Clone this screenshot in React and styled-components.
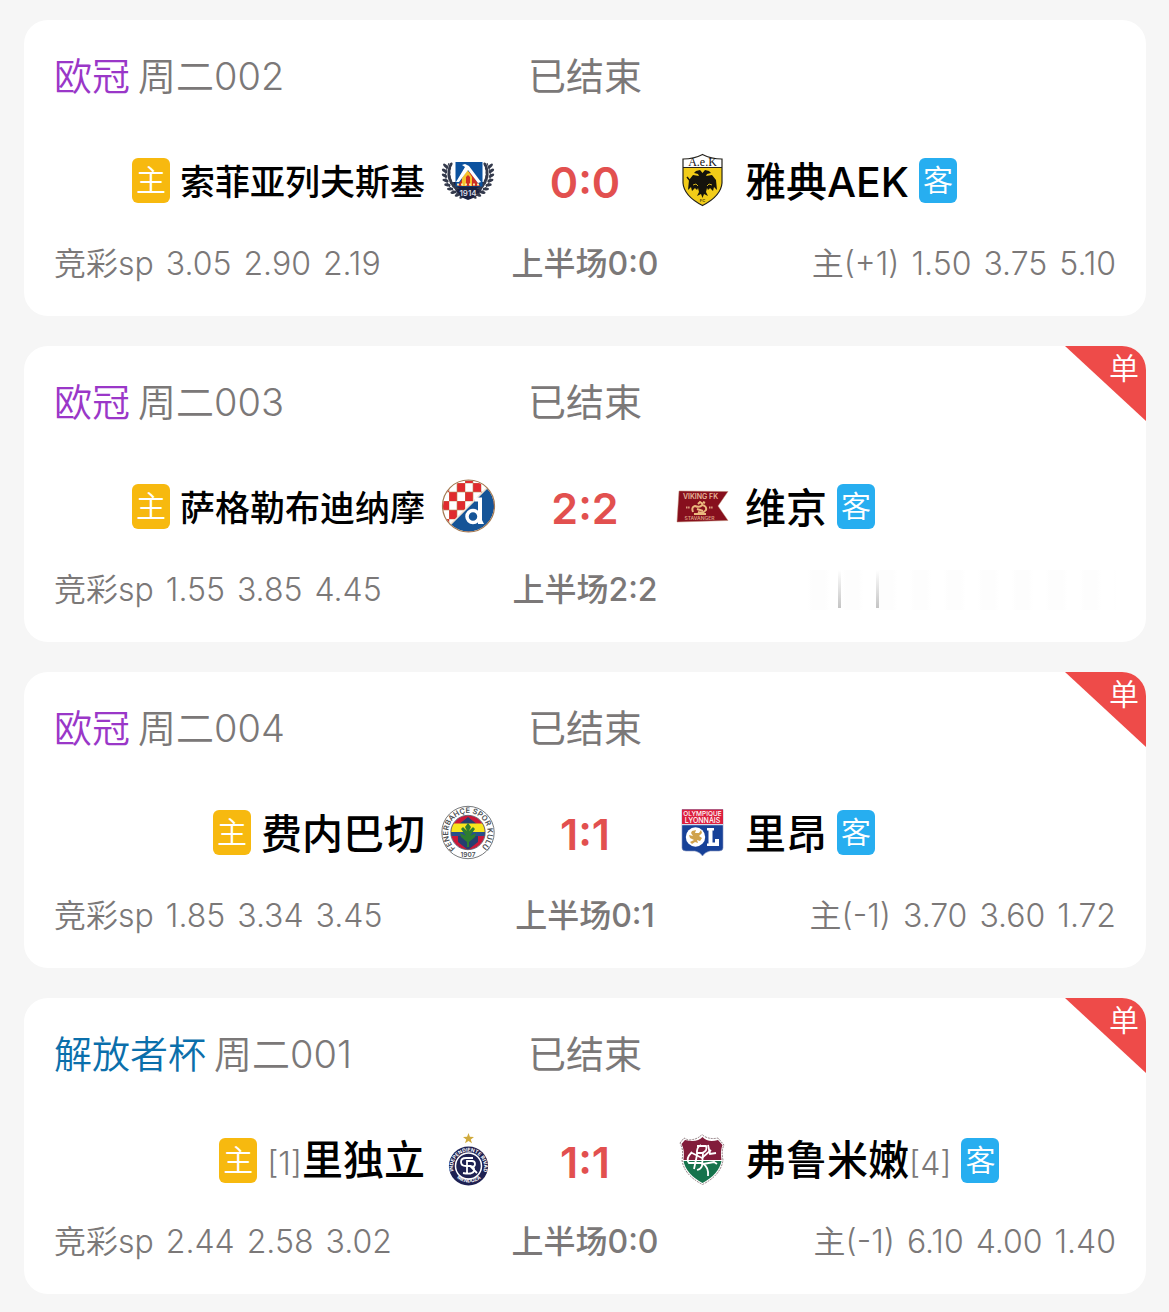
import styled, { createGlobalStyle } from 'styled-components';

const GlobalStyle = createGlobalStyle`
  * {
    box-sizing: border-box;
  }

  body {
    margin: 0;
    background: #f6f6f6;
    font-family: Inter, "Noto Sans CJK SC", sans-serif;
    color: #7b7878;
  }
`;

const MatchList = styled.main`
  display: flex;
  flex-direction: column;
  gap: 30px;
  padding: 20px 23px 17px 24px;
`;

const Card = styled.article`
  position: relative;
  overflow: hidden;
  padding: 32px 30px;
  background: #ffffff;
  border-radius: 24px;
`;

const HeaderRow = styled.header`
  display: grid;
  grid-template-columns: 1fr auto 1fr;
  align-items: center;
  font-size: 38px;
  line-height: 48px;
  font-weight: 350;
`;

const League = styled.span`
  margin-right: 8px;
  color: ${(props) => props.$color};
`;

const Status = styled.span`
  font-weight: 400;
`;

const TeamsRow = styled.div`
  display: grid;
  grid-template-columns: 1fr 180px 1fr;
  align-items: center;
  height: 56px;
  margin: 52px 0 36px;
`;

const Team = styled.div`
  display: flex;
  align-items: center;
  justify-content: ${(props) => (props.$home ? 'flex-end' : 'flex-start')};
  white-space: nowrap;
`;

const TeamName = styled.span`
  margin: ${(props) => (props.$home ? '0 16px 0 10px' : '0 10px 0 16px')};
  padding-top: 4px;
  color: #000000;
  font-size: ${(props) => (props.$long ? '35px' : '41px')};
  line-height: 52px;
  font-weight: 500;
`;

const Rank = styled.small`
  color: #7b7878;
  font-size: 32px;
  font-weight: 350;
`;

const Side = styled.span`
  width: 38px;
  height: 45px;
  border-radius: 6px;
  background: ${(props) => (props.$home ? '#f7b90f' : '#27aef0')};
  color: #ffffff;
  font-size: 30px;
  line-height: 44px;
  font-weight: 350;
  text-align: center;
`;

const Score = styled.strong`
  padding-top: 4px;
  color: #e2504f;
  font-size: 43px;
  line-height: 52px;
  font-weight: 600;
  text-align: center;
`;

const OddsRow = styled.footer`
  display: grid;
  grid-template-columns: 1fr auto 1fr;
  align-items: center;
  font-size: 32px;
  line-height: 40px;
  font-weight: 350;
`;

const Odds = styled.span`
  display: flex;
  gap: 12px;
  justify-self: ${(props) => (props.$end ? 'end' : 'start')};
`;

const HalfTime = styled.span`
  font-weight: 500;
`;

const Corner = styled.div`
  position: absolute;
  top: 0;
  right: 0;
  width: 81px;
  height: 75px;
  padding: 4px 7px 0 0;
  background: #ee4b49;
  clip-path: polygon(0 0, 100% 0, 100% 100%);
  color: #ffffff;
  font-size: 30px;
  line-height: 36px;
  font-weight: 350;
  text-align: right;
`;

/* faded block shown when there are no handicap odds */
const EmptyOdds = styled.span`
  justify-self: end;
  display: flex;
  gap: 35px;
  width: 320px;
  height: 40px;
  padding-left: 42px;
  background: repeating-linear-gradient(90deg, #ffffff 0 12px, #fdfdfd 16px 28px, #ffffff 34px);
`;

const FadeLine = styled.i`
  width: 3px;
  height: 38px;
  background: linear-gradient(#ffffff, #c4c4c4);
`;

const Crest = styled.svg`
  flex: none;
  width: 54px;
  height: 54px;
  overflow: visible;
`;

const leaves = [0, 1, 2, 3, 4, 5, 6, 7, 8];

const Levski = () => (
  <Crest viewBox="0 0 54 54" aria-hidden="true">
    <path d="M12 29 Q14 43 27 47 Q41 43 43 29 Z" fill="#1b2140" />
    {[1, -1].map((dir) => (
      <g key={dir} transform={dir === 1 ? 'translate(-1 0)' : 'translate(55 0) scale(-1 1)'}>
        <path d="M9 10 Q2 24 9 33 Q15 42 25 43" fill="none" stroke="#343a4c" strokeWidth="1" />
        {leaves.map((i) => {
          const a = ((204 - i * 12) * Math.PI) / 180;
          const x = 27 + Math.cos(a) * 21;
          const y = 20 + Math.sin(a) * 22;
          return (
            <g key={i} transform={`translate(${x} ${y}) rotate(${-8 - i * 10})`} fill="#343a4c">
              <ellipse cx="-3" cy="0" rx="1.5" ry="3.2" transform="rotate(-35)" />
              <ellipse cx="3" cy="0" rx="1.5" ry="3.2" transform="rotate(35)" />
            </g>
          );
        })}
      </g>
    ))}
    <path d="M14.5 9 H41.5 V33.5 H14.5 Z" fill="#0c529f" />
    <path d="M17 33 L25 19 H29 L39 33 Z" fill="#cf3023" />
    <path d="M26.5 17 L31 24 V33 H29 V24 L27 22 L25 24 V33 H21 V25 Z" fill="#f5c32c" />
    <path d="M21 12 L24 11 L28 13 L40 29 L37 30 L27 17 L18 29 L15 29 L24 14 Z" fill="#ffffff" />
    <path d="M16 31.5 H40" stroke="#f9e7a4" strokeWidth="2" strokeDasharray="2 2" />
    <path d="M16 36 H38 L35 43 Q27 47 19 43 Z" fill="#1b2140" />
    <text x="27" y="42.5" fontSize="8" fontWeight="600" fill="#d7d8e2" textAnchor="middle">1914</text>
  </Crest>
);

const Aek = () => (
  <Crest viewBox="0 0 54 54" aria-hidden="true">
    <path d="M8 6 Q19 6 27.5 1.5 Q36 6 47 6 V30 Q46 43 27.5 52.5 Q9 43 8 30 Z" fill="#ffffff" />
    <path d="M8 14.5 H47 V30 Q46 43 27.5 52.5 Q9 43 8 30 Z" fill="#f2cc18" />
    <path
      d="M8 6 Q19 6 27.5 1.5 Q36 6 47 6 V30 Q46 43 27.5 52.5 Q9 43 8 30 Z M8 14.5 H47"
      fill="none"
      stroke="#24221c"
      strokeWidth="1.2"
    />
    <text x="27.5" y="13" fontFamily="Liberation Serif" fontSize="12" fontWeight="400" fill="#111111" textAnchor="middle">A.e.K</text>
    <path
      d="M27.5 20 L25 17 L21 18 L19 20 L23 21 L24 23 L18 22 L14 27 L13 37 L16 34 L17 38 L20 35 L22 37 L23 35 L24 39 L22 43 L26 41 L27.5 45 L29 41 L33 43 L31 39 L32 35 L33 37 L35 35 L38 38 L39 34 L42 37 L41 27 L37 22 L31 23 L32 21 L36 20 L34 18 L30 17 Z"
      fill="#15130c"
    />
    <path d="M12 24 L20 34 M35 34 L39 31 M20 34 L22 35 M33 35 L35 34" stroke="#15130c" strokeWidth="1.5" />
    <path d="M18 32 L21 31 L23 33 M32 33 L34 31 L37 32" fill="none" stroke="#d5b41b" strokeWidth="1" />
    <text x="27.5" y="49" fontSize="4" fontWeight="700" fill="#5c4d0d" textAnchor="middle">FC</text>
  </Crest>
);

const Dinamo = () => (
  <Crest viewBox="0 0 54 54" aria-hidden="true">
    <defs>
      <clipPath id="dinamo-round">
        <circle cx="27.5" cy="27" r="25.5" />
      </clipPath>
      <pattern id="dinamo-checks" x="8" y="4" width="16" height="18" patternUnits="userSpaceOnUse">
        <rect width="16" height="18" fill="#ffffff" />
        <path d="M0 9 H8 V18 H0 Z M8 0 H16 V9 H8 Z" fill="#e02b2e" />
        <path d="M0 0 V18 M8 0 V18 M0 9 H16 M0 0 H16" stroke="#b9895a" strokeWidth="0.6" />
      </pattern>
    </defs>
    <g clipPath="url(#dinamo-round)">
      <rect width="54" height="54" fill="url(#dinamo-checks)" />
      <path d="M6 49 L50 5 L60 5 V60 H6 Z" fill="#155497" />
      <path d="M6 49 L50 5" stroke="#eee2d2" strokeWidth="1.5" />
    </g>
    <circle cx="27.5" cy="27" r="26" fill="none" stroke="#a47a53" strokeWidth="1.2" />
    {/* bowl and stem of the club's round letter mark */}
    <circle cx="32" cy="37.5" r="6" fill="#155497" stroke="#ffffff" strokeWidth="3.5" />
    <path d="M34 18.5 H41 V41 L43 45 H37 V22.5 H34 Z" fill="#ffffff" />
  </Crest>
);

const Viking = () => (
  <Crest viewBox="0 0 54 54" aria-hidden="true">
    <path d="M4 12 L53 12.5 L43 27 L53 41.5 L2 43 Z" fill="#870f1d" stroke="#c09079" strokeWidth="0.5" />
    <text x="25.5" y="19.5" fontSize="7" fontWeight="600" fill="#e7b89a" textAnchor="middle">VIKING FK</text>
    <g stroke="#eab87e" fill="none" strokeWidth="2">
      <path d="M18 33 Q16 28 20 27 Q25 29 27 26 Q32 27 31 31 Q28 35 23 33" />
      <path d="M23 25 L25 23 L28 25 M28 23 L30 24 M19 35 H31 M22 30 L28 32" />
    </g>
    <path d="M11 28.5 H15 M34 28.5 H38" stroke="#d99b7d" strokeWidth="2" strokeDasharray="1.5 0.6" />
    <text x="24.5" y="41" fontSize="5" fontWeight="600" fill="#d99b7d" textAnchor="middle">STAVANGER</text>
  </Crest>
);

const Fenerbahce = () => (
  <Crest viewBox="0 0 54 54" aria-hidden="true">
    <defs>
      <path id="fener-ring" d="M14.5 43 A19.7 19.7 0 1 1 42 40.5" />
      <clipPath id="fener-core">
        <circle cx="27" cy="27.5" r="17" />
      </clipPath>
    </defs>
    <circle cx="27" cy="27.5" r="26.2" fill="#ffffff" stroke="#53575a" strokeWidth="0.8" />
    <g clipPath="url(#fener-core)">
      <rect x="9" y="9" width="37" height="37" fill="#ca1839" />
      <path d="M17 20 L27 12 L37 20 V37 L27 45 L17 37 Z" fill="#243f70" />
      <rect x="9" y="18.5" width="37" height="9" fill="#f8e51d" />
      <rect x="9" y="27" width="37" height="4" fill="#28508a" />
    </g>
    <path
      d="M27 18 L30 22 L28 26 L32 22 L34 24 L29 31 L35 28 L34 32 L28 37 V42 H26 V37 L20 32 L19 28 L25 31 L20 24 L22 22 L26 26 L24 22 Z"
      fill="#2e7d31"
    />
    <circle cx="27" cy="27.5" r="17.2" fill="none" stroke="#4e4f60" strokeWidth="0.8" />
    <text fontSize="7.5" fontWeight="600" fill="#4c4f53">
      <textPath href="#fener-ring">FENERBAHÇE SPOR KULÜBÜ</textPath>
    </text>
    <text x="27" y="51.5" fontSize="6.5" fontWeight="600" fill="#4c4f53" textAnchor="middle">1907</text>
  </Crest>
);

const Lyon = () => (
  <Crest viewBox="0 0 54 54" aria-hidden="true">
    <path d="M7 4.5 H48 V43 Q48 46 44 46 H35 Q30 47 27.5 51 Q25 47 20 46 H11 Q7 46 7 43 Z" fill="#174198" stroke="#8795bf" strokeWidth="0.6" />
    <path d="M7 4.5 H48 V19 H7 Z" fill="#dc1f3f" />
    <path d="M7 19.7 H48" stroke="#ffffff" strokeWidth="1" />
    <text x="27.5" y="10.8" fontSize="6.5" fontWeight="500" fill="#ffffff" textAnchor="middle">OLYMPIQUE</text>
    <text x="27.5" y="17.5" fontSize="7" fontWeight="500" fill="#ffffff" textAnchor="middle">LYONNAIS</text>
    <circle cx="20.5" cy="32" r="9.7" fill="#ffffff" />
    <path
      d="M17 26 L21 25 L20 28 L24 28 L26 25 L27 28 L24 31 L27 33 L25 36 L22 35 L23 38 L20 37 L17 39 L15 37 L19 35 L15 33 L14 30 L18 31 L16 28 Z"
      fill="#d0a24c"
    />
    <path d="M32 23 H39 V25.5 H37.5 V37.5 H40 V34 H44 V41 H32 V38.5 H33.5 V25.5 H32 Z" fill="#ffffff" />
  </Crest>
);

const Rivadavia = () => (
  <Crest viewBox="0 0 54 54" aria-hidden="true">
    <defs>
      <path id="riva-top" d="M12.5 38 A15.5 15.5 0 1 1 42.5 38" />
      <path id="riva-bottom" d="M16 45 A18.5 18.5 0 0 0 40 45" />
    </defs>
    <path d="M27.5 0 L28.9 3.7 L33 3.9 L29.8 6.4 L31 10.3 L27.5 8 L24 10.3 L25.2 6.4 L22 3.9 L26.1 3.7 Z" fill="#d0aa3c" />
    <circle cx="27.5" cy="33" r="19.6" fill="#1e2152" />
    <circle cx="27.5" cy="33" r="13" fill="#1e2152" stroke="#ffffff" strokeWidth="1.5" />
    <text fontSize="5" fontWeight="700" fill="#ffffff">
      <textPath href="#riva-top">INDEPENDIENTE RIVAD.</textPath>
    </text>
    <text fontSize="5" fontWeight="700" fill="#ffffff">
      <textPath href="#riva-bottom" startOffset="50%" textAnchor="middle">MENDOZA</textPath>
    </text>
    <path
      d="M32 25 H25 Q20 25 20 29 Q20 33 25 33 H30 Q34 34 33 38 Q31 42 22 40 M26 41 V28 H31 Q34 28 34 31 Q34 34 30 34 L36 40"
      fill="none"
      stroke="#ffffff"
      strokeWidth="1.8"
    />
  </Crest>
);

const Fluminense = () => (
  <Crest viewBox="0 0 54 54" aria-hidden="true">
    <path
      d="M5 10 L9 5 L13 7 Q22 7 27 1.5 Q33 7 43 5 L49 12 Q46 18 48 27 Q46 42 27.5 51.5 Q9 42 7 27 Q9 17 5 10 Z"
      fill="#ffffff"
      stroke="#63484d"
      strokeWidth="0.7"
      strokeDasharray="2 1"
    />
    <path d="M6.5 11 L10 7 Q22 10 27.5 4 Q33 10 43 7 L47.5 12 Q45 18 46.5 27 H8.5 Q10 17 6.5 11 Z" fill="#821d3b" />
    <path d="M8.5 28 H46.5 Q44 41 27.5 50 Q11 41 8.5 28 Z" fill="#16734c" />
    <g fill="none" stroke="#ffffff" strokeWidth="1.8">
      <path d="M26 12 Q21 14 22 22 L19 36 M22 13 H31 Q33 18 27 20 H22" />
      <path d="M17 19 Q10 26 14 30 H27 Q34 34 33 43 M17 20 L27 25 L36 17" />
      <path d="M28 20 L27 33 Q26 36 22 37 M28 31 L39 29 L42 31 M33 12 L35 21 L41 20" />
    </g>
  </Crest>
);

const matches = [
  {
    id: '002',
    league: '欧冠',
    color: '#9a37c8',
    score: '0:0',
    half: '0:0',
    home: { name: '索菲亚列夫斯基', crest: <Levski />, long: true },
    away: { name: '雅典AEK', crest: <Aek /> },
    odds: ['3.05', '2.90', '2.19'],
    handicap: ['主(+1)', '1.50', '3.75', '5.10'],
  },
  {
    id: '003',
    league: '欧冠',
    color: '#9a37c8',
    score: '2:2',
    half: '2:2',
    home: { name: '萨格勒布迪纳摩', crest: <Dinamo />, long: true },
    away: { name: '维京', crest: <Viking /> },
    odds: ['1.55', '3.85', '4.45'],
    single: true,
  },
  {
    id: '004',
    league: '欧冠',
    color: '#9a37c8',
    score: '1:1',
    half: '0:1',
    home: { name: '费内巴切', crest: <Fenerbahce /> },
    away: { name: '里昂', crest: <Lyon /> },
    odds: ['1.85', '3.34', '3.45'],
    handicap: ['主(-1)', '3.70', '3.60', '1.72'],
    single: true,
  },
  {
    id: '001',
    league: '解放者杯',
    color: '#0b6fab',
    score: '1:1',
    half: '0:0',
    home: { name: '里独立', rank: '[1]', crest: <Rivadavia /> },
    away: { name: '弗鲁米嫩', rank: '[4]', crest: <Fluminense /> },
    odds: ['2.44', '2.58', '3.02'],
    handicap: ['主(-1)', '6.10', '4.00', '1.40'],
    single: true,
  },
];

const Match = ({ match }) => {
  const { home, away } = match;

  return (
    <Card>
      {match.single && <Corner>单</Corner>}
      <HeaderRow>
        <span>
          <League $color={match.color}>{match.league}</League>
          周二{match.id}
        </span>
        <Status>已结束</Status>
      </HeaderRow>
      <TeamsRow>
        <Team $home>
          <Side $home>主</Side>
          <TeamName $home $long={home.long}>
            {home.rank && <Rank>{home.rank}</Rank>}
            {home.name}
          </TeamName>
          {home.crest}
        </Team>
        <Score>{match.score}</Score>
        <Team>
          {away.crest}
          <TeamName>
            {away.name}
            {away.rank && <Rank>{away.rank}</Rank>}
          </TeamName>
          <Side>客</Side>
        </Team>
      </TeamsRow>
      <OddsRow>
        <Odds>
          <span>竞彩sp</span>
          {match.odds.map((value) => (
            <span key={value}>{value}</span>
          ))}
        </Odds>
        <HalfTime>上半场{match.half}</HalfTime>
        {match.handicap ? (
          <Odds $end>
            {match.handicap.map((value) => (
              <span key={value}>{value}</span>
            ))}
          </Odds>
        ) : (
          <EmptyOdds>
            <FadeLine />
            <FadeLine />
          </EmptyOdds>
        )}
      </OddsRow>
    </Card>
  );
};

const App = () => (
  <>
    <GlobalStyle />
    <MatchList>
      {matches.map((match) => (
        <Match key={match.id} match={match} />
      ))}
    </MatchList>
  </>
);

export default App;
